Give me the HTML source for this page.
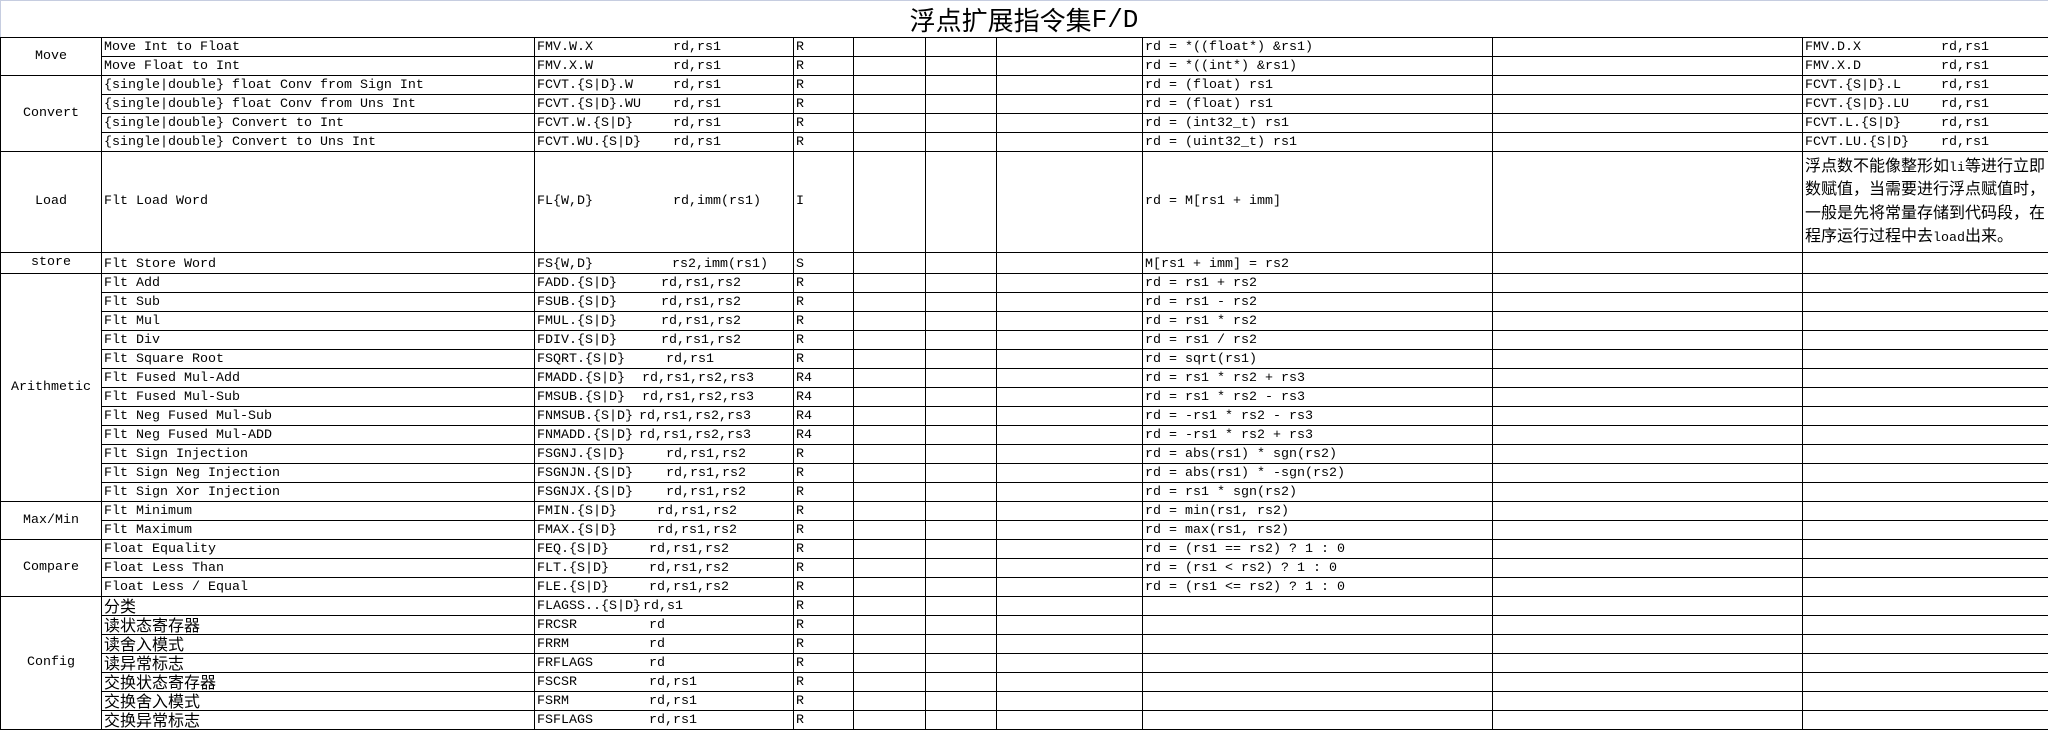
<!DOCTYPE html>
<html><head><meta charset="utf-8">
<style>
html,body{margin:0;padding:0;background:#fff;}
body{width:2048px;height:731px;position:relative;overflow:hidden;font-family:"Liberation Mono","Noto Sans CJK SC",monospace;font-size:13.33px;color:#000;}
#topline{position:absolute;left:0;top:0;width:2048px;height:1px;background:#c6cde0;}
#leftline{position:absolute;left:0;top:0;width:1px;height:37px;background:#c6cde0;}
#title{position:absolute;left:0;top:4px;width:2048px;text-align:center;font-size:26px;line-height:32px;}
#title .l{font-family:"Liberation Mono",monospace;}
table{position:absolute;left:0;top:37px;border-collapse:collapse;table-layout:fixed;width:2049px;}
tr{height:19px;}
td{border:1px solid #000;padding:0 0 1px 2px;line-height:14px;vertical-align:bottom;white-space:nowrap;overflow:hidden;}
td:last-child{border-right:none;}
td.cat{text-align:center;vertical-align:middle;padding:0;}
.c{font-size:16px;font-family:"Noto Sans CJK SC","WenQuanYi Zen Hei",sans-serif;line-height:14px;vertical-align:top;position:relative;top:-2px;}
.m{display:inline-block;}
.note{vertical-align:middle;white-space:nowrap;line-height:19.5px;padding-left:2px;}
.note .c{line-height:19.5px;vertical-align:baseline;top:0;}
</style></head><body>
<div id="topline"></div><div id="leftline"></div>
<div id="title"><span class="c" style="font-size:26px;line-height:32px;top:0">浮点扩展指令集</span><span class="l">F/D</span></div>
<table>
<colgroup><col style="width:101px"><col style="width:433px"><col style="width:259px"><col style="width:60px"><col style="width:72px"><col style="width:71px"><col style="width:146px"><col style="width:350px"><col style="width:310px"><col style="width:247px"></colgroup>
<tr><td class="cat" rowspan="2">Move</td><td>Move Int to Float</td><td><span class="m" style="width:136px">FMV.W.X</span>rd,rs1</td><td>R</td><td></td><td></td><td></td><td>rd = *((float*) &amp;rs1)</td><td></td><td><span class="m" style="width:136px">FMV.D.X</span>rd,rs1</td></tr>
<tr><td>Move Float to Int</td><td><span class="m" style="width:136px">FMV.X.W</span>rd,rs1</td><td>R</td><td></td><td></td><td></td><td>rd = *((int*) &amp;rs1)</td><td></td><td><span class="m" style="width:136px">FMV.X.D</span>rd,rs1</td></tr>
<tr><td class="cat" rowspan="4">Convert</td><td>{single|double} float Conv from Sign Int</td><td><span class="m" style="width:136px">FCVT.{S|D}.W</span>rd,rs1</td><td>R</td><td></td><td></td><td></td><td>rd = (float) rs1</td><td></td><td><span class="m" style="width:136px">FCVT.{S|D}.L</span>rd,rs1</td></tr>
<tr><td>{single|double} float Conv from Uns Int</td><td><span class="m" style="width:136px">FCVT.{S|D}.WU</span>rd,rs1</td><td>R</td><td></td><td></td><td></td><td>rd = (float) rs1</td><td></td><td><span class="m" style="width:136px">FCVT.{S|D}.LU</span>rd,rs1</td></tr>
<tr><td>{single|double} Convert to Int</td><td><span class="m" style="width:136px">FCVT.W.{S|D}</span>rd,rs1</td><td>R</td><td></td><td></td><td></td><td>rd = (int32_t) rs1</td><td></td><td><span class="m" style="width:136px">FCVT.L.{S|D}</span>rd,rs1</td></tr>
<tr><td>{single|double} Convert to  Uns Int</td><td><span class="m" style="width:136px">FCVT.WU.{S|D}</span>rd,rs1</td><td>R</td><td></td><td></td><td></td><td>rd = (uint32_t) rs1</td><td></td><td><span class="m" style="width:136px">FCVT.LU.{S|D}</span>rd,rs1</td></tr>
<tr style="height:101px"><td class="cat">Load</td><td style="vertical-align:middle">Flt Load Word</td><td style="vertical-align:middle"><span class="m" style="width:136px">FL{W,D}</span>rd,imm(rs1)</td><td style="vertical-align:middle">I</td><td></td><td></td><td></td><td style="vertical-align:middle">rd = M[rs1 + imm]</td><td></td><td class="note"><span class="c">浮点数不能像整形如</span>li<span class="c">等进行立即</span><br><span class="c">数赋值，当需要进行浮点赋值时，</span><br><span class="c">一般是先将常量存储到代码段，在</span><br><span class="c">程序运行过程中去</span>load<span class="c">出来。</span></td></tr>
<tr style="height:21px"><td class="cat">store</td><td>Flt Store Word</td><td><span class="m" style="width:135px">FS{W,D}</span>rs2,imm(rs1)</td><td>S</td><td></td><td></td><td></td><td>M[rs1 + imm] = rs2</td><td></td><td></td></tr>
<tr><td class="cat" rowspan="12">Arithmetic</td><td>Flt Add</td><td><span class="m" style="width:124px">FADD.{S|D}</span>rd,rs1,rs2</td><td>R</td><td></td><td></td><td></td><td>rd = rs1 + rs2</td><td></td><td></td></tr>
<tr><td>Flt Sub</td><td><span class="m" style="width:124px">FSUB.{S|D}</span>rd,rs1,rs2</td><td>R</td><td></td><td></td><td></td><td>rd = rs1 - rs2</td><td></td><td></td></tr>
<tr><td>Flt Mul</td><td><span class="m" style="width:124px">FMUL.{S|D}</span>rd,rs1,rs2</td><td>R</td><td></td><td></td><td></td><td>rd = rs1 * rs2</td><td></td><td></td></tr>
<tr><td>Flt Div</td><td><span class="m" style="width:124px">FDIV.{S|D}</span>rd,rs1,rs2</td><td>R</td><td></td><td></td><td></td><td>rd = rs1 / rs2</td><td></td><td></td></tr>
<tr><td>Flt Square Root</td><td><span class="m" style="width:129px">FSQRT.{S|D}</span>rd,rs1</td><td>R</td><td></td><td></td><td></td><td>rd = sqrt(rs1)</td><td></td><td></td></tr>
<tr><td>Flt Fused Mul-Add</td><td><span class="m" style="width:105px">FMADD.{S|D}</span>rd,rs1,rs2,rs3</td><td>R4</td><td></td><td></td><td></td><td>rd = rs1 * rs2 + rs3</td><td></td><td></td></tr>
<tr><td>Flt Fused Mul-Sub</td><td><span class="m" style="width:105px">FMSUB.{S|D}</span>rd,rs1,rs2,rs3</td><td>R4</td><td></td><td></td><td></td><td>rd = rs1 * rs2 - rs3</td><td></td><td></td></tr>
<tr><td>Flt Neg Fused Mul-Sub</td><td><span class="m" style="width:102px">FNMSUB.{S|D}</span>rd,rs1,rs2,rs3</td><td>R4</td><td></td><td></td><td></td><td>rd = -rs1 * rs2 - rs3</td><td></td><td></td></tr>
<tr><td>Flt Neg Fused Mul-ADD</td><td><span class="m" style="width:102px">FNMADD.{S|D}</span>rd,rs1,rs2,rs3</td><td>R4</td><td></td><td></td><td></td><td>rd = -rs1 * rs2 + rs3</td><td></td><td></td></tr>
<tr><td>Flt Sign Injection</td><td><span class="m" style="width:129px">FSGNJ.{S|D}</span>rd,rs1,rs2</td><td>R</td><td></td><td></td><td></td><td>rd = abs(rs1) * sgn(rs2)</td><td></td><td></td></tr>
<tr><td>Flt Sign Neg Injection</td><td><span class="m" style="width:129px">FSGNJN.{S|D}</span>rd,rs1,rs2</td><td>R</td><td></td><td></td><td></td><td>rd = abs(rs1) * -sgn(rs2)</td><td></td><td></td></tr>
<tr><td>Flt Sign Xor Injection</td><td><span class="m" style="width:129px">FSGNJX.{S|D}</span>rd,rs1,rs2</td><td>R</td><td></td><td></td><td></td><td>rd = rs1 * sgn(rs2)</td><td></td><td></td></tr>
<tr><td class="cat" rowspan="2">Max/Min</td><td>Flt Minimum</td><td><span class="m" style="width:120px">FMIN.{S|D}</span>rd,rs1,rs2</td><td>R</td><td></td><td></td><td></td><td>rd = min(rs1, rs2)</td><td></td><td></td></tr>
<tr><td>Flt Maximum</td><td><span class="m" style="width:120px">FMAX.{S|D}</span>rd,rs1,rs2</td><td>R</td><td></td><td></td><td></td><td>rd = max(rs1, rs2)</td><td></td><td></td></tr>
<tr><td class="cat" rowspan="3">Compare</td><td>Float Equality</td><td><span class="m" style="width:112px">FEQ.{S|D}</span>rd,rs1,rs2</td><td>R</td><td></td><td></td><td></td><td>rd = (rs1 == rs2) ? 1 : 0</td><td></td><td></td></tr>
<tr><td>Float Less Than</td><td><span class="m" style="width:112px">FLT.{S|D}</span>rd,rs1,rs2</td><td>R</td><td></td><td></td><td></td><td>rd = (rs1 &lt; rs2) ? 1 : 0</td><td></td><td></td></tr>
<tr><td>Float Less / Equal</td><td><span class="m" style="width:112px">FLE.{S|D}</span>rd,rs1,rs2</td><td>R</td><td></td><td></td><td></td><td>rd = (rs1 &lt;= rs2) ? 1 : 0</td><td></td><td></td></tr>
<tr><td class="cat" rowspan="7">Config</td><td><span class="c">分类</span></td><td><span class="m" style="width:106px">FLAGSS..{S|D}</span>rd,s1</td><td>R</td><td></td><td></td><td></td><td></td><td></td><td></td></tr>
<tr><td><span class="c">读状态寄存器</span></td><td><span class="m" style="width:112px">FRCSR</span>rd</td><td>R</td><td></td><td></td><td></td><td></td><td></td><td></td></tr>
<tr><td><span class="c">读舍入模式</span></td><td><span class="m" style="width:112px">FRRM</span>rd</td><td>R</td><td></td><td></td><td></td><td></td><td></td><td></td></tr>
<tr><td><span class="c">读异常标志</span></td><td><span class="m" style="width:112px">FRFLAGS</span>rd</td><td>R</td><td></td><td></td><td></td><td></td><td></td><td></td></tr>
<tr><td><span class="c">交换状态寄存器</span></td><td><span class="m" style="width:112px">FSCSR</span>rd,rs1</td><td>R</td><td></td><td></td><td></td><td></td><td></td><td></td></tr>
<tr><td><span class="c">交换舍入模式</span></td><td><span class="m" style="width:112px">FSRM</span>rd,rs1</td><td>R</td><td></td><td></td><td></td><td></td><td></td><td></td></tr>
<tr><td><span class="c">交换异常标志</span></td><td><span class="m" style="width:112px">FSFLAGS</span>rd,rs1</td><td>R</td><td></td><td></td><td></td><td></td><td></td><td></td></tr>
</table>
</body></html>
